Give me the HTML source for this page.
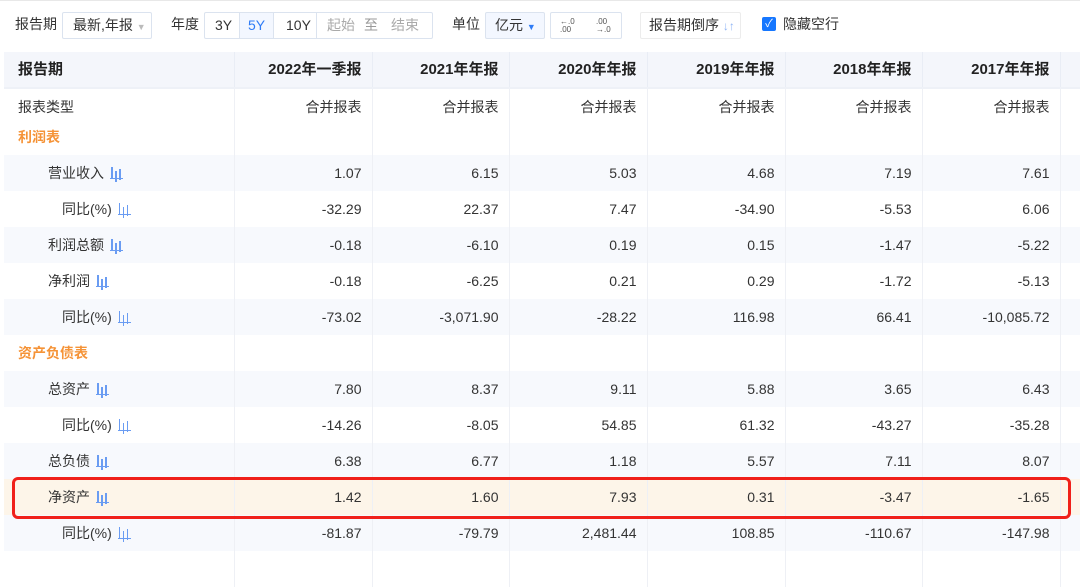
<!DOCTYPE html>
<html><head><meta charset="utf-8"><style>
*{margin:0;padding:0;box-sizing:border-box}
body{width:1080px;height:561px;overflow:hidden;background:#fff;font-family:"Liberation Sans","Noto Sans CJK SC",sans-serif;font-size:14px;color:#333;position:relative}
.top{position:absolute;top:0;left:0;width:1080px;height:1px;background:#e8e8e8}
.lbl{position:absolute;top:16px;font-size:14px;color:#333;line-height:17px}
.box{position:absolute;top:12px;height:27px;border:1px solid #dbe3ef;border-radius:2px;font-size:14px;line-height:25px;color:#333;background:#fff}
table{position:absolute;left:4px;top:52px;border-collapse:collapse;table-layout:fixed;width:1090px}
td{height:36px;line-height:16px;border-left:1px solid #eef0f5;text-align:right;padding:0 10px 0 0;white-space:nowrap;font-size:14px;color:#333;overflow:hidden}
td:first-child{border-left:none;text-align:left;padding-left:14px}
tr.h td{background:#f4f6fb;font-weight:bold;font-size:15px;color:#222;border-bottom:2px solid #eef1f7;border-left-color:#e9edf5}
tr.s td{background:#f7f9fd}
tr.hl td{background:#fdf5e9}
tr.sec td:first-child{color:#f59337;font-weight:bold}
tr.short td{height:31px;padding-bottom:6px}
.i1{padding-left:44px!important}
.i2{padding-left:58px!important}
.ic{display:inline-block;width:13px;height:12px;margin-left:6px;vertical-align:-1px;border-bottom:1.5px solid #6a9cf2;position:relative}
.ic:before{content:"";position:absolute;left:1px;bottom:0;width:1.5px;height:11px;background:#6a9cf2;box-shadow:4px 4px 0 #6a9cf2,8px 2px 0 #6a9cf2}
.red{position:absolute;left:12px;top:477px;width:1059px;height:42px;border:3px solid #f0201a;border-radius:6px}
</style></head><body>
<div class="top"></div>
<div class="lbl" style="left:15px">报告期</div>
<div class="box" style="left:62px;width:90px;padding-left:10px">最新,年报 <span style="color:#bbb;font-size:9px">▼</span></div>
<div class="lbl" style="left:171px">年度</div>
<div class="box" style="left:204px;width:229px">
<span style="position:absolute;left:10px">3Y</span>
<span style="position:absolute;left:34px;width:35px;height:25px;text-align:center;color:#2f7cf6;background:#f3f7ff;border-left:1px solid #dbe3ef;border-right:1px solid #dbe3ef">5Y</span>
<span style="position:absolute;left:81px">10Y</span>
<span style="position:absolute;left:111px;height:25px;border-left:1px solid #dbe3ef"></span>
<span style="position:absolute;left:122px;color:#aaa">起始</span>
<span style="position:absolute;left:159px;color:#999">至</span>
<span style="position:absolute;left:186px;color:#aaa">结束</span></div>
<div class="lbl" style="left:452px">单位</div>
<div class="box" style="left:485px;width:60px;padding-left:9px;background:#f3f7ff">亿元 <span style="color:#2f7cf6;font-size:9px">▼</span></div>
<div class="box" style="left:550px;width:72px;font-size:8px;line-height:8px;color:#555">
<span style="position:absolute;left:9px;top:5px">←.0<br>.00</span><span style="position:absolute;left:45px;top:5px">.00<br>→.0</span></div>
<div class="box" style="left:640px;width:101px;padding-left:8px;border-color:#ececec">报告期倒序 <span style="color:#8fb5f5;font-size:12px">↓↑</span></div>
<div style="position:absolute;left:762px;top:17px;width:14px;height:14px;background:#1677ff;border-radius:2px;color:#fff;font-size:11px;line-height:14px;text-align:center">✓</div>
<div class="lbl" style="left:783px">隐藏空行</div>
<table>
<colgroup><col style="width:230px"><col style="width:138px"><col style="width:137px"><col style="width:138px"><col style="width:138px"><col style="width:137px"><col style="width:138px"><col style="width:34px"></colgroup>
<tr class="h"><td>报告期</td><td>2022年一季报</td><td>2021年年报</td><td>2020年年报</td><td>2019年年报</td><td>2018年年报</td><td>2017年年报</td><td></td></tr>
<tr><td>报表类型</td><td>合并报表</td><td>合并报表</td><td>合并报表</td><td>合并报表</td><td>合并报表</td><td>合并报表</td><td></td></tr>
<tr class="sec short"><td>利润表</td><td></td><td></td><td></td><td></td><td></td><td></td><td></td></tr>
<tr class="s"><td class="i1">营业收入<span class="ic"></span></td><td>1.07</td><td>6.15</td><td>5.03</td><td>4.68</td><td>7.19</td><td>7.61</td><td></td></tr>
<tr><td class="i2">同比(%)<span class="ic"></span></td><td>-32.29</td><td>22.37</td><td>7.47</td><td>-34.90</td><td>-5.53</td><td>6.06</td><td></td></tr>
<tr class="s"><td class="i1">利润总额<span class="ic"></span></td><td>-0.18</td><td>-6.10</td><td>0.19</td><td>0.15</td><td>-1.47</td><td>-5.22</td><td></td></tr>
<tr><td class="i1">净利润<span class="ic"></span></td><td>-0.18</td><td>-6.25</td><td>0.21</td><td>0.29</td><td>-1.72</td><td>-5.13</td><td></td></tr>
<tr class="s"><td class="i2">同比(%)<span class="ic"></span></td><td>-73.02</td><td>-3,071.90</td><td>-28.22</td><td>116.98</td><td>66.41</td><td>-10,085.72</td><td></td></tr>
<tr class="sec"><td>资产负债表</td><td></td><td></td><td></td><td></td><td></td><td></td><td></td></tr>
<tr class="s"><td class="i1">总资产<span class="ic"></span></td><td>7.80</td><td>8.37</td><td>9.11</td><td>5.88</td><td>3.65</td><td>6.43</td><td></td></tr>
<tr><td class="i2">同比(%)<span class="ic"></span></td><td>-14.26</td><td>-8.05</td><td>54.85</td><td>61.32</td><td>-43.27</td><td>-35.28</td><td></td></tr>
<tr class="s"><td class="i1">总负债<span class="ic"></span></td><td>6.38</td><td>6.77</td><td>1.18</td><td>5.57</td><td>7.11</td><td>8.07</td><td></td></tr>
<tr class="hl"><td class="i1">净资产<span class="ic"></span></td><td>1.42</td><td>1.60</td><td>7.93</td><td>0.31</td><td>-3.47</td><td>-1.65</td><td></td></tr>
<tr class="s"><td class="i2">同比(%)<span class="ic"></span></td><td>-81.87</td><td>-79.79</td><td>2,481.44</td><td>108.85</td><td>-110.67</td><td>-147.98</td><td></td></tr>
<tr><td></td><td></td><td></td><td></td><td></td><td></td><td></td><td></td></tr>
</table>
<div class="red"></div>
</body></html>
